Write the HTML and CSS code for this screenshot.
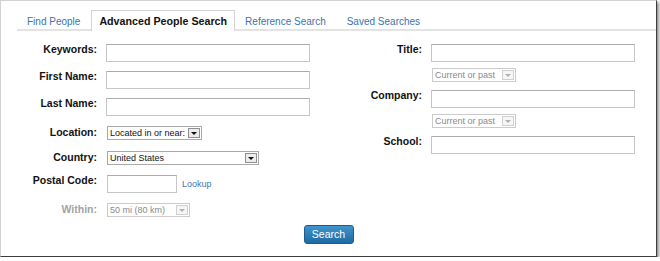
FILE: index.html
```html
<!DOCTYPE html>
<html lang="en">
<head>
    <meta charset="UTF-8">
    <title>Advanced People Search</title>
    <link rel="stylesheet" href="styles.css">
</head>
<body>
    <div class="frame">
        <ul class="tabs">
            <li><a href="#">Find People</a></li>
            <li class="active"><a href="#">Advanced People Search</a></li>
            <li><a href="#">Reference Search</a></li>
            <li><a href="#">Saved Searches</a></li>
        </ul>

        <form class="search">
            <div class="cols">
                <div class="col col-left">
                    <div class="row">
                        <label>Keywords:</label>
                        <input type="text" class="text">
                    </div>
                    <div class="row">
                        <label>First Name:</label>
                        <input type="text" class="text">
                    </div>
                    <div class="row">
                        <label>Last Name:</label>
                        <input type="text" class="text">
                    </div>
                    <div class="row pick">
                        <label>Location:</label>
                        <div class="select loc">
                            <span class="value">Located in or near:</span>
                            <span class="arrow"><i></i></span>
                        </div>
                    </div>
                    <div class="row pick">
                        <label>Country:</label>
                        <div class="select country">
                            <span class="value">United States</span>
                            <span class="arrow"><i></i></span>
                        </div>
                    </div>
                    <div class="row">
                        <label>Postal Code:</label>
                        <input type="text" class="text postal">
                        <a href="#" class="lookup">Lookup</a>
                    </div>
                    <div class="row pick">
                        <label class="muted">Within:</label>
                        <div class="select within disabled">
                            <span class="value">50 mi (80 km)</span>
                            <span class="arrow"><i></i></span>
                        </div>
                    </div>
                </div>

                <div class="col col-right">
                    <div class="row">
                        <label>Title:</label>
                        <input type="text" class="text">
                    </div>
                    <div class="row sub">
                        <div class="select past disabled">
                            <span class="value">Current or past</span>
                            <span class="arrow"><i></i></span>
                        </div>
                    </div>
                    <div class="row">
                        <label>Company:</label>
                        <input type="text" class="text">
                    </div>
                    <div class="row sub">
                        <div class="select past disabled">
                            <span class="value">Current or past</span>
                            <span class="arrow"><i></i></span>
                        </div>
                    </div>
                    <div class="row">
                        <label>School:</label>
                        <input type="text" class="text">
                    </div>
                </div>
            </div>

            <div class="actions">
                <button type="button">Search</button>
            </div>
        </form>
    </div>
</body>
</html>
```

FILE: styles.css
```css
body {
    margin: 0;
    background: #fff;
    font-family: "Liberation Sans", Arial, sans-serif;
    color: #111;
}
.frame {
    width: 655px;
    height: 255px;
    border: 1px solid #d2d2d2;
    border-right-color: #3c3c3c;
    border-bottom-color: #3c3c3c;
    box-shadow: 2px 2px 3px rgba(0, 0, 0, 0.45);
    background: #fff;
}

/* tabs */
.tabs {
    list-style: none;
    margin: 9px 0 0 16px;
    padding: 0;
    display: flex;
    align-items: flex-end;
    border-bottom: 2px solid #e3e3e3;
}
.tabs li {
    border: 1px solid transparent;
    border-bottom: none;
    padding: 4px 10px 1px 9px;
    font-size: 10px;
    line-height: 13px;
}
.tabs a {
    color: #3a73ad;
    text-decoration: none;
}
.tabs li.active {
    border-color: #d4d4d4;
    background: #fff;
    padding: 4px 7px 3px 7px;
    margin-bottom: -2px;
    font-size: 10.7px;
    font-weight: bold;
}
.tabs li.active a {
    color: #111;
}

/* form */
.search {
    padding-top: 13px;
}
.cols {
    display: flex;
}
.col {
    display: flex;
    flex-direction: column;
}
.col-left {
    width: 330px;
}
.row {
    display: flex;
    align-items: flex-start;
    margin-top: 9px;
}
.row:first-child {
    margin-top: 0;
}
.row label {
    flex: 0 0 96px;
    margin-right: 9px;
    text-align: right;
    font-size: 10.5px;
    font-weight: bold;
    line-height: 12px;
    margin-top: -1px;
}
.col-right .row label {
    flex-basis: 91px;
}
.row.pick {
    padding: 1px 0;
}
.row.pick label {
    margin-top: 0;
}
.row label.muted {
    color: #a3a3a3;
}
.col-right .row.sub {
    margin-top: 6px;
    padding-left: 100px;
}
.col-right .row.sub + .row {
    margin-top: 8px;
}

.text {
    box-sizing: border-box;
    width: 204px;
    height: 18px;
    margin: 0;
    border: 1px solid #c6c6c6;
    border-top-color: #acacac;
    padding: 0 3px;
    font: 10px "Liberation Sans", Arial, sans-serif;
}
.text.postal {
    width: 70px;
    margin-left: 1px;
}
.lookup {
    margin-left: 5px;
    font-size: 9px;
    line-height: 18px;
    color: #3a78b5;
    text-decoration: none;
}

/* drop-downs */
.select {
    box-sizing: border-box;
    height: 14px;
    margin-left: 1px;
    border: 1px solid #a9a9a9;
    display: flex;
    align-items: center;
    font-size: 9px;
    line-height: 12px;
    color: #111;
    background: #fff;
}
.select .value {
    flex: 1;
    padding-left: 2px;
    white-space: nowrap;
    overflow: hidden;
}
.select .arrow {
    box-sizing: border-box;
    width: 12px;
    height: 10px;
    margin-right: 1px;
    border: 1px solid #8f8f8f;
    background: #ececec;
    display: flex;
    align-items: center;
    justify-content: center;
}
.select .arrow i {
    width: 0;
    height: 0;
    border-left: 3px solid transparent;
    border-right: 3px solid transparent;
    border-top: 3px solid #111;
    margin-top: 1px;
}
.select.loc {
    width: 95px;
}
.select.country {
    width: 152px;
}
.select.within {
    width: 83px;
}
.select.past {
    width: 84px;
}
.select.disabled {
    border-color: #cbcbcb;
    color: #8a8a8a;
}
.select.disabled .arrow {
    border-color: #d0d0d0;
    background: #f6f6f6;
}
.select.disabled .arrow i {
    border-top-color: #b0b0b0;
}

/* submit */
.actions {
    margin-top: 6px;
    text-align: center;
}
.actions button {
    width: 50px;
    height: 19px;
    padding: 0;
    border: 1px solid #1d5d8d;
    border-radius: 3px;
    background: linear-gradient(#4094cd, #1e6aa2);
    color: #fff;
    font: 10.5px "Liberation Sans", Arial, sans-serif;
    cursor: pointer;
}
```
